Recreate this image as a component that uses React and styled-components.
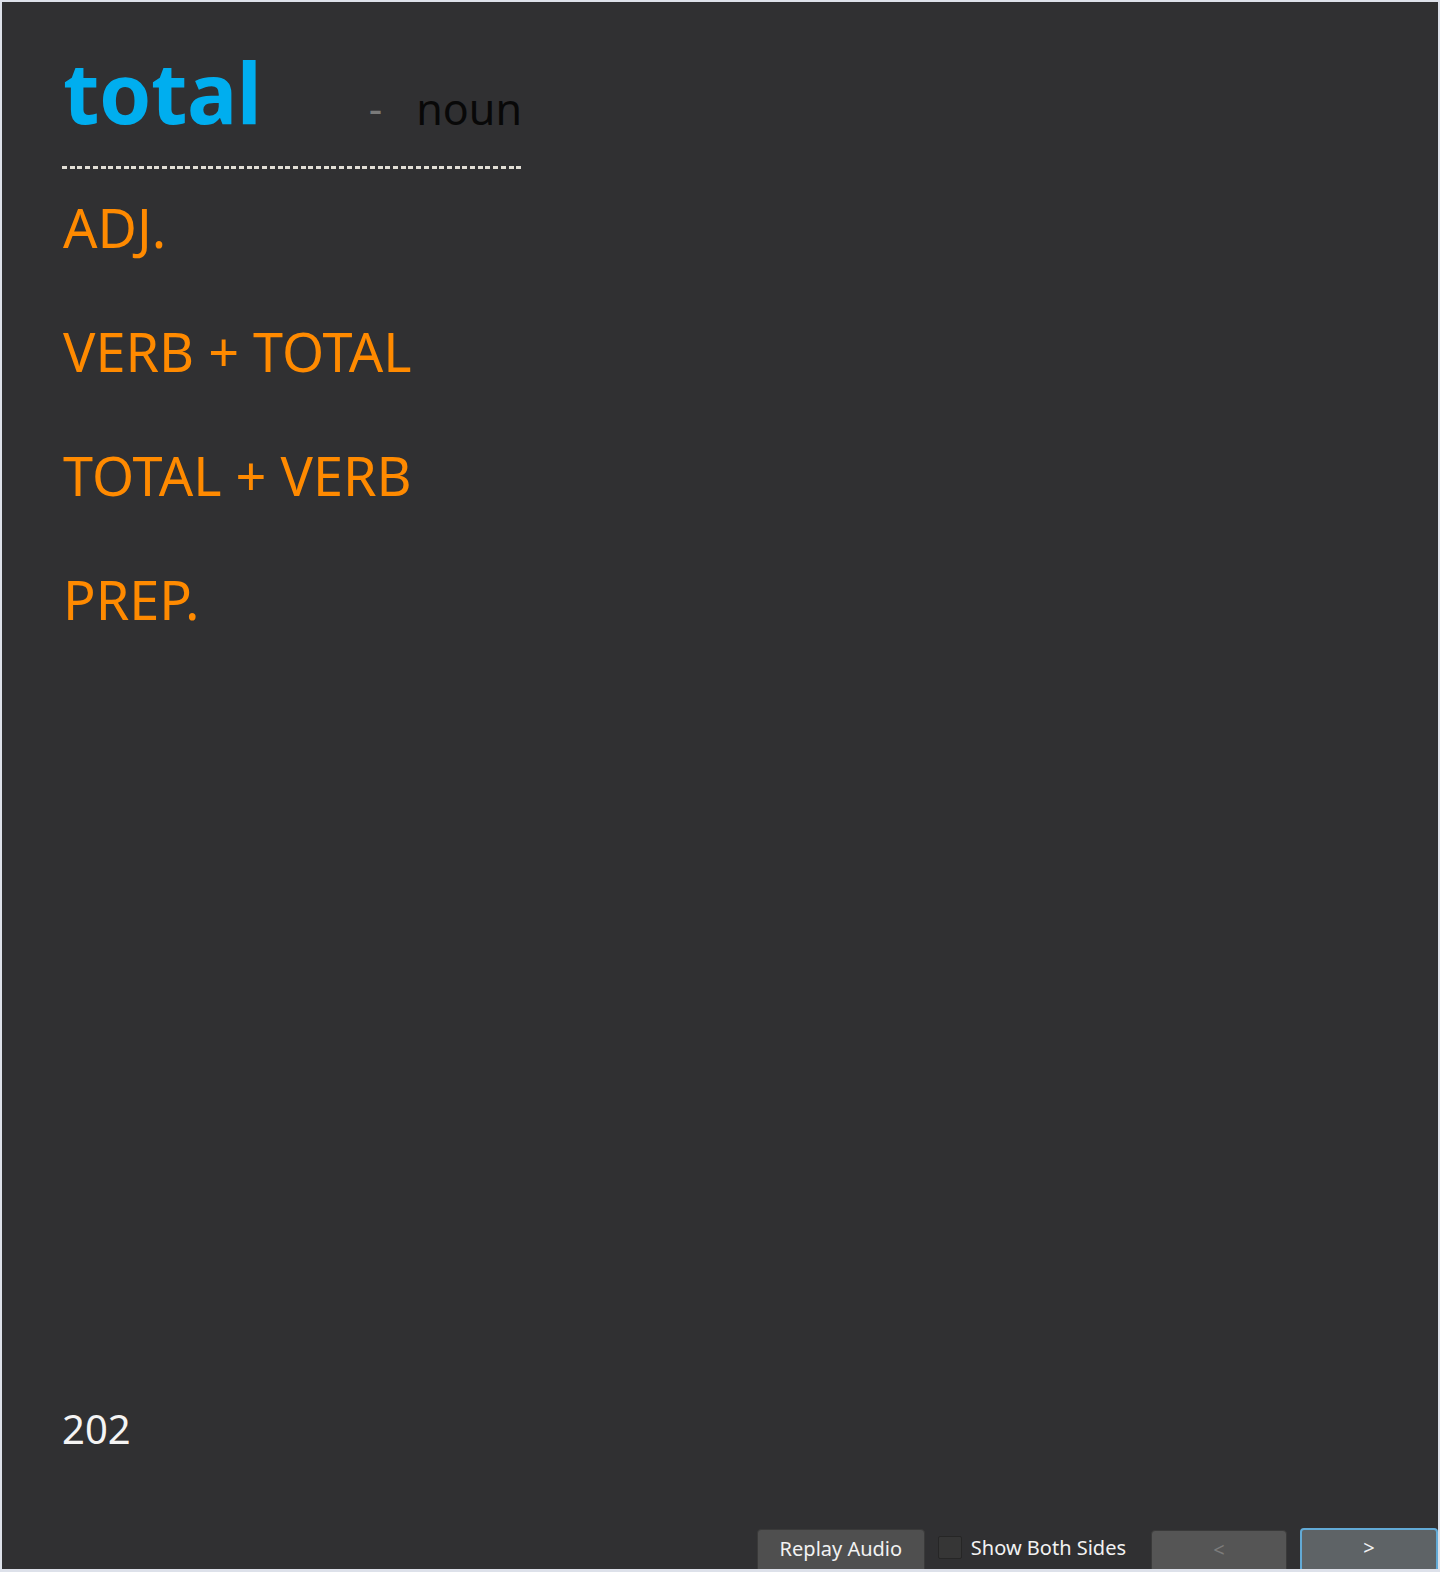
import React from "react";
import styled, { createGlobalStyle } from "styled-components";

const Global = createGlobalStyle`
  html, body { margin: 0; padding: 0; }
  body {
    background: #dde1ea;
    font-family: "Noto Sans", "Open Sans", sans-serif;
  }
  * { box-sizing: border-box; }
`;

const Page = styled.div`
  height: 1572px;
  padding: 2px 2px 3px 2px;
`;

const Frame = styled.div`
  height: 100%;
  background: #303032;
  display: flex;
  flex-direction: column;
  overflow: hidden;
`;

const Card = styled.div`
  flex: 1;
  display: flex;
  flex-direction: column;
  align-items: flex-start;
  padding: 50px 60px 75px 60px;
`;

const Header = styled.div`
  width: 460px;
  display: flex;
  align-items: baseline;
`;

const Word = styled.span`
  font-size: 84px;
  line-height: 80px;
  font-weight: 700;
  color: #00aeef;
  padding-left: 1px;
  letter-spacing: -0.5px;
`;

const Dash = styled.span`
  margin-left: auto;
  font-size: 42px;
  color: #7a7a7a;
  margin-right: 34px;
`;

const PartOfSpeech = styled.span`
  font-size: 43px;
  color: #080808;
  position: relative;
  top: 1px;
`;

const Rule = styled.div`
  width: 460px;
  height: 3px;
  margin-top: 29px;
  background: repeating-linear-gradient(
    to right,
    #e2ded6 0,
    #e2ded6 5px,
    transparent 5px,
    transparent 7.7px
  );
`;

const List = styled.div`
  margin-top: -4px;
  display: flex;
  flex-direction: column;
`;

const Collocation = styled.div`
  font-size: 54px;
  line-height: 124px;
  color: #ff8a00;
  padding-left: 1px;
`;

const Count = styled.div`
  margin-top: auto;
  font-size: 40px;
  line-height: 48px;
  color: #f4f4f4;
`;

const Footer = styled.div`
  height: 41px;
  flex-shrink: 0;
  display: flex;
  justify-content: flex-end;
  align-items: flex-start;
  overflow: hidden;
`;

const Button = styled.button`
  width: ${(p) => p.$w}px;
  height: 44px;
  margin-top: ${(p) => p.$top}px;
  margin-left: ${(p) => p.$gap}px;
  border-radius: 4px;
  border: ${(p) => (p.$focus ? "2px solid #62aad6" : "1px solid #3a3a3a")};
  background: ${(p) => (p.$focus ? "#5e6366" : p.$disabled ? "#555555" : "#4f4f4f")};
  color: ${(p) => (p.$disabled ? "#7c7c7c" : "#f2f2f2")};
  font-family: "Noto Sans", "Open Sans", sans-serif;
  font-size: 20px;
  padding: 0 0 5px 0;
  cursor: pointer;
`;

const CheckLabel = styled.label`
  display: flex;
  align-items: center;
  margin-left: 13px;
  margin-top: 7px;
  gap: 9px;
  font-size: 20px;
  color: #f2f2f2;
  height: 24px;
`;

const Box = styled.span`
  width: 24px;
  height: 23px;
  background: #363636;
  border: 1px solid #262626;
  border-radius: 2px;
`;

const items = ["ADJ.", "VERB + TOTAL", "TOTAL + VERB", "PREP."];

export default function App() {
  return (
    <>
      <Global />
      <Page>
        <Frame>
          <Card>
            <Header>
              <Word>total</Word>
              <Dash>-</Dash>
              <PartOfSpeech>noun</PartOfSpeech>
            </Header>
            <Rule />
            <List>
              {items.map((t) => (
                <Collocation key={t}>{t}</Collocation>
              ))}
            </List>
            <Count>202</Count>
          </Card>
          <Footer>
            <Button $w={168} $top={1} $gap={0}>Replay Audio</Button>
            <CheckLabel>
              <Box />
              Show Both Sides
            </CheckLabel>
            <Button $w={136} $top={2} $gap={25} $disabled>&lt;</Button>
            <Button $w={138} $top={0} $gap={13} $focus>&gt;</Button>
          </Footer>
        </Frame>
      </Page>
    </>
  );
}
